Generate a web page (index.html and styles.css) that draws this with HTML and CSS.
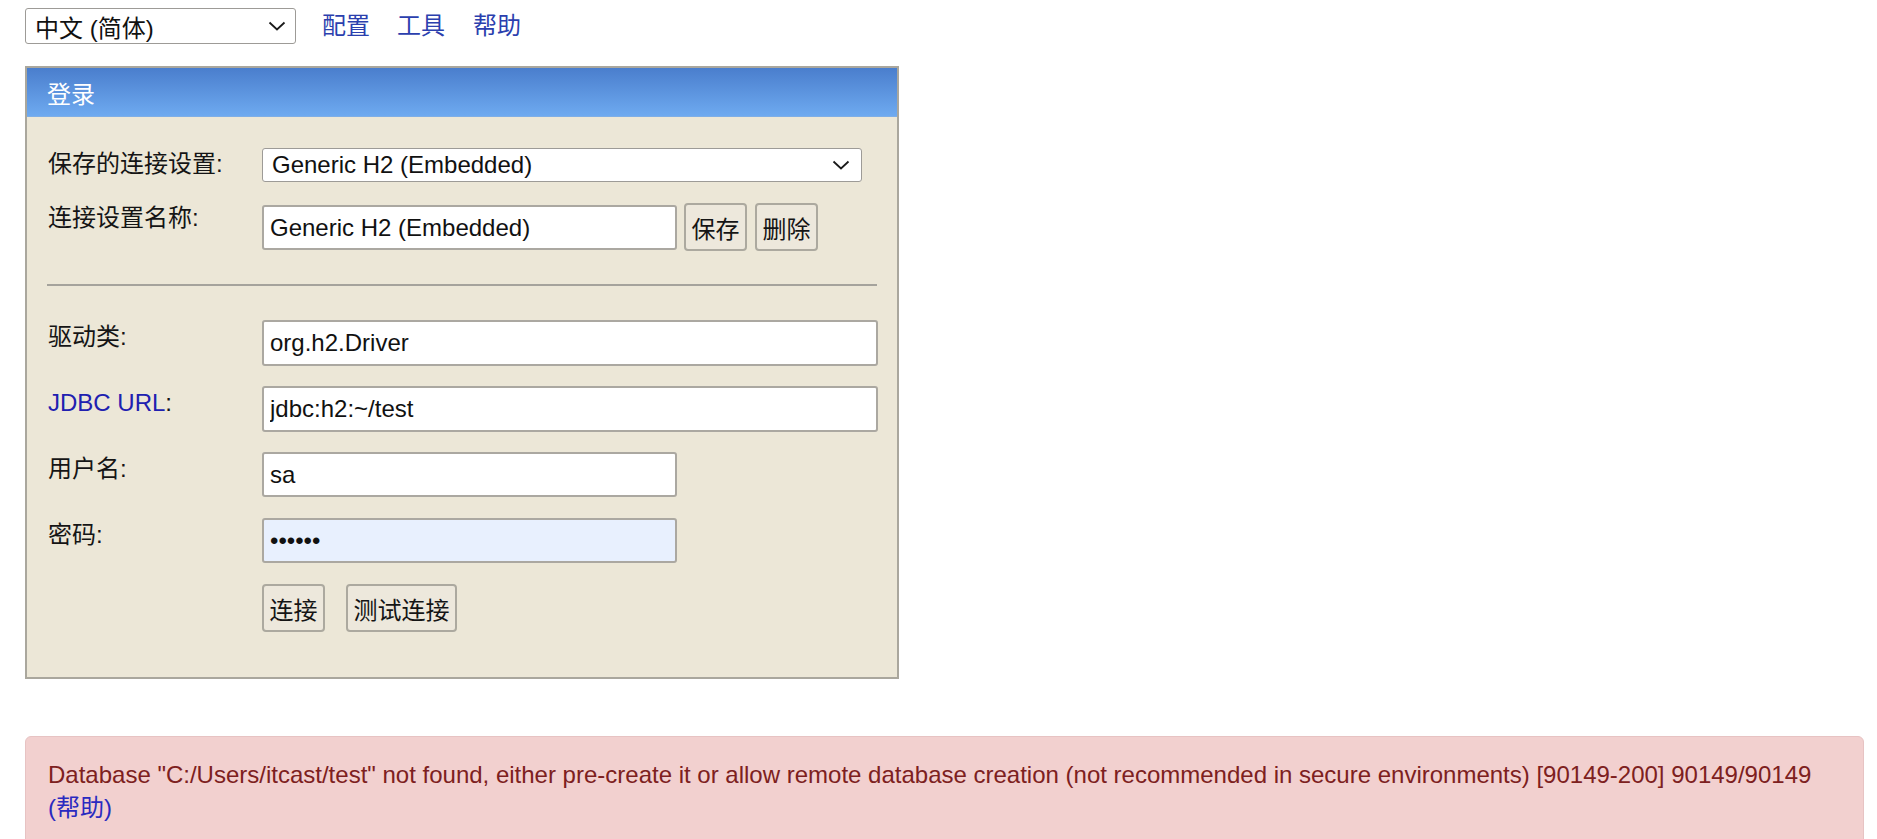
FILE: index.html
```html
<!DOCTYPE html>
<html lang="zh-CN">
<head>
<meta charset="utf-8">
<title>H2 Console</title>
<link rel="stylesheet" href="styles.css">
</head>
<body>
<div class="toolbar">
  <div class="select lang">
    <span>中文 (简体)</span>
    <svg class="chev" width="18" height="10" viewBox="0 0 18 10"><path d="M1.5 1.5 L9 8.5 L16.5 1.5" fill="none" stroke="#1a1a1a" stroke-width="1.8"/></svg>
  </div>
  <a class="nav n1" href="#">配置</a>
  <a class="nav n2" href="#">工具</a>
  <a class="nav n3" href="#">帮助</a>
</div>

<div class="panel">
  <div class="panel-head">登录</div>
  <div class="panel-body">
    <div class="row r-saved">
      <div class="label l-saved">保存的连接设置:</div>
      <div class="select wide">
        <span>Generic H2 (Embedded)</span>
        <svg class="chev" width="18" height="10" viewBox="0 0 18 10"><path d="M1.5 1.5 L9 8.5 L16.5 1.5" fill="none" stroke="#1a1a1a" stroke-width="1.8"/></svg>
      </div>
    </div>
    <div class="row r-name">
      <div class="label l-name">连接设置名称:</div>
      <input class="field half name-field" type="text" value="Generic H2 (Embedded)">
      <button class="btn b-save">保存</button>
      <button class="btn b-del">删除</button>
    </div>
    <div class="divider"></div>
    <div class="row r-driver">
      <div class="label">驱动类:</div>
      <input class="field full" type="text" value="org.h2.Driver">
    </div>
    <div class="row r-url">
      <div class="label"><a class="jdbc" href="#">JDBC URL</a>:</div>
      <input class="field full" type="text" value="jdbc:h2:~/test">
    </div>
    <div class="row r-user">
      <div class="label">用户名:</div>
      <input class="field half" type="text" value="sa">
    </div>
    <div class="row r-pass">
      <div class="label">密码:</div>
      <input class="field half pass" type="password" value="123456">
    </div>
    <div class="row r-actions">
      <div class="label"></div>
      <button class="btn b-connect">连接</button>
      <button class="btn b-test">测试连接</button>
    </div>
  </div>
</div>

<div class="error">
  <span>Database "C:/Users/itcast/test" not found, either pre-create it or allow remote database creation (not recommended in secure environments) [90149-200] 90149/90149</span><br>
  <a class="help" href="#">(帮助)</a>
</div>
</body>
</html>
```

FILE: styles.css
```css
html, body {
  margin: 0;
  padding: 0;
  background: #ffffff;
}

body {
  font-family: "Liberation Sans", Arial, "Noto Sans CJK SC", sans-serif;
  font-size: 24px;
  color: #111;
}

/* top toolbar */
.toolbar {
  display: flex;
  align-items: center;
  height: 36px;
  margin: 8px 0 0 25px;
}

.select {
  box-sizing: border-box;
  display: flex;
  align-items: center;
  justify-content: space-between;
  background: #fff;
  border: 1.5px solid #9d9b97;
  border-radius: 3px;
  color: #111;
}

.select.lang {
  width: 271px;
  height: 36px;
  padding: 0 9px 0 9px;
}

.chev {
  flex: none;
  display: block;
}

.nav {
  color: #2b3fae;
  text-decoration: none;
  line-height: 36px;
}
.n1 { margin-left: 26px; }
.n2 { margin-left: 27px; }
.n3 { margin-left: 28px; }

/* login panel */
.panel {
  box-sizing: border-box;
  width: 874px;
  margin: 22px 0 0 25px;
  border: 2px solid #aaa79d;
  background: #ece7d7;
}

.panel-head {
  height: 49px;
  display: flex;
  align-items: center;
  padding-left: 20px;
  color: #fff;
  background: linear-gradient(#4a7ecd, #6eaaf0);
  border-bottom: 1px solid #7eaee6;
  box-sizing: border-box;
}

.panel-body {
  padding: 31px 0 45px 21px;
}

.row {
  display: flex;
  align-items: flex-start;
}

.label {
  flex: none;
  width: 214px;
  line-height: 30px;
  padding-top: 2px;
  color: #151515;
}
.l-saved { padding-top: 1px; }
.l-name { padding-top: 0; }

.jdbc {
  color: #2020b0;
  text-decoration: none;
}

.select.wide {
  width: 600px;
  height: 34px;
  padding: 0 11px 0 9px;
}

.field {
  box-sizing: border-box;
  height: 45px;
  border: 2px solid #aba8a1;
  border-radius: 3px;
  padding: 0 6px;
  font: inherit;
  color: #111;
  background: #fff;
  outline: none;
  margin: 0;
}
.half { width: 415px; }
.full { width: 616px; height: 46px; }
.pass { background: #e8f0fe; }

.name-field { margin-top: 2px; }

.btn {
  box-sizing: border-box;
  height: 48px;
  padding: 0;
  font: inherit;
  color: #151515;
  background: #ede8dc;
  border: 2px solid #aca99f;
  border-radius: 4px;
  margin: 0;
}
.b-save { width: 63px; margin-left: 7px; }
.b-del { width: 63px; margin-left: 8px; }
.b-connect { width: 63px; }
.b-test { width: 111px; margin-left: 21px; }

.r-name { margin-top: 21px; }

.divider {
  width: 830px;
  margin: 33px 0 0 -1px;
  border-top: 2px solid #a5a39c;
}

.r-driver { margin-top: 34px; }
.r-url { margin-top: 20px; }
.r-user { margin-top: 20px; }
.r-pass { margin-top: 21px; }
.r-actions { margin-top: 21px; }

/* error message */
.error {
  margin: 57px 13px 0 25px;
  padding: 21px 16px 30px 22px;
  background: #f2d0cf;
  border: 1px solid #e7c3c3;
  border-radius: 6px;
  color: #7d2020;
  line-height: 33px;
}

.help {
  color: #2a2ac0;
  text-decoration: none;
}
```
